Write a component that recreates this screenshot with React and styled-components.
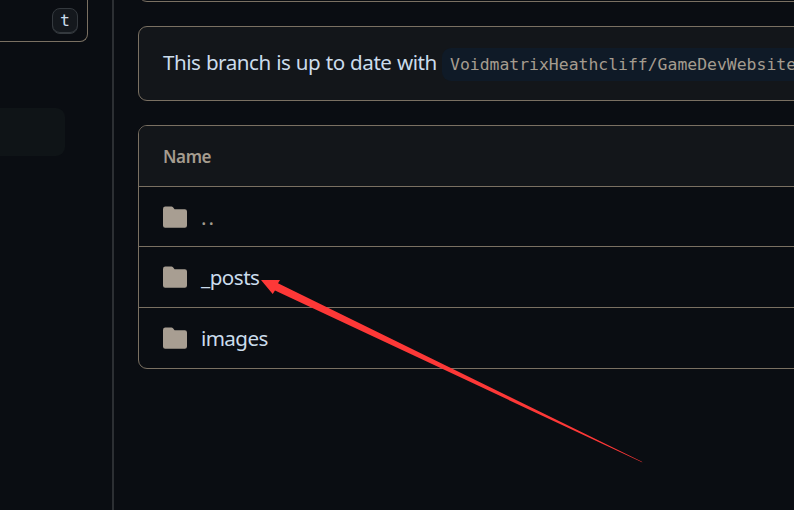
import React from "react";
import styled, { createGlobalStyle } from "styled-components";

const line = "#7a7062";
const canvas = "#0a0d12";
const subtle = "#13161a";

const GlobalStyle = createGlobalStyle`
  * { box-sizing: border-box; }
  html, body { margin: 0; background: ${canvas}; overflow: hidden; }
  body { font-family: "Noto Sans", "Open Sans", sans-serif; color: #cbdcec; }
`;

const Page = styled.div`
  position: relative;
  display: flex;
  width: 794px;
  height: 510px;
  overflow: hidden;
  background: ${canvas};
`;

const Sidebar = styled.aside`
  flex: none;
  width: 114px;
  border-right: 2px solid #2c2f33;
`;

const SearchBox = styled.div`
  display: flex;
  justify-content: flex-end;
  width: 88px;
  height: 42px;
  padding: 8px 9px 0 0;
  border: solid ${line};
  border-width: 0 1px 1px 0;
  border-bottom-right-radius: 8px;
`;

const KeyHint = styled.kbd`
  display: flex;
  align-items: center;
  justify-content: center;
  width: 26px;
  height: 26px;
  border: 1px solid #34393e;
  border-radius: 8px;
  background: #14181d;
  box-shadow: inset 0 -1px 0 #34393e;
  font: 16.5px/1 "DejaVu Sans Mono", monospace;
`;

const SelectedItem = styled.div`
  width: 65px;
  height: 48px;
  margin-top: 66px;
  border-radius: 0 9px 9px 0;
  background: #0f1417;
`;

const Main = styled.main`
  flex: 1;
  min-width: 0;
  padding-left: 24px;
`;

const Panel = styled.section`
  width: 700px;
  border: 1px solid ${line};
  border-radius: 9px;
  overflow: hidden;
`;

const PreviousPanel = styled(Panel)`
  height: 20px;
  margin-top: -18px;
`;

const BranchStatus = styled(Panel)`
  display: flex;
  align-items: center;
  height: 75px;
  margin-top: 24px;
  padding-left: 24px;
  background: ${subtle};
  white-space: nowrap;
`;

const StatusText = styled.span`
  width: 279px;
  font-size: 20.6px;
  letter-spacing: -0.46px;
  word-spacing: 0.5px;
  line-height: 30px;
  padding-bottom: 3px;
`;

const BranchName = styled.code`
  height: 33px;
  padding: 0 8px;
  margin-top: 1px;
  border-radius: 9px;
  background: #0f1a27;
  color: #a59c8f;
  font: 16.43px/33px "DejaVu Sans Mono", monospace;
`;

const FileTable = styled(Panel)`
  height: 244px;
  margin-top: 24px;
`;

const TableHead = styled.header`
  height: 60px;
  padding: 1px 0 0 24px;
  background: ${subtle};
  color: #a59c8f;
  font-size: 17px;
  font-weight: 600;
  letter-spacing: -0.4px;
  line-height: 60px;
`;

const FileRow = styled.div`
  display: flex;
  align-items: center;
  height: ${(p) => p.$height}px;
  padding-left: 24px;
  border-top: 1px solid ${line};
`;

const FolderSvg = styled.svg`
  flex: none;
  width: 24px;
  height: 22px;
  margin-right: 14px;
  fill: #a89e92;
`;

const FileName = styled.span`
  color: ${(p) => (p.$muted ? "#a59c8f" : "#cbdcec")};
  font-size: 20.6px;
  line-height: 30px;
  letter-spacing: ${(p) => p.$tracking}px;
`;

const Arrow = styled.svg`
  position: absolute;
  inset: 0;
  width: 794px;
  height: 510px;
  pointer-events: none;
`;

const files = [
  { name: "..", muted: true, height: 60, tracking: 2 },
  { name: "_posts", height: 61, tracking: -0.5 },
  { name: "images", height: 61, tracking: -0.6 },
];

const Folder = () => (
  <FolderSvg viewBox="0 0 24 22">
    <path d="M2.4 .5H8.5Q9.4 .5 10 1.2L11.2 2.8Q11.5 3.3 12.2 3.3H21.8Q24 3.3 24 5.5V19.6Q24 21.8 21.8 21.8H2.2Q0 21.8 0 19.6V2.9Q0 .5 2.4 .5Z" />
  </FolderSvg>
);

export default function App() {
  return (
    <Page>
      <GlobalStyle />
      <Sidebar>
        <SearchBox>
          <KeyHint>t</KeyHint>
        </SearchBox>
        <SelectedItem />
      </Sidebar>
      <Main>
        <PreviousPanel />
        <BranchStatus>
          <StatusText>This branch is up to date with</StatusText>
          <BranchName>VoidmatrixHeathcliff/GameDevWebsite</BranchName>
        </BranchStatus>
        <FileTable>
          <TableHead>Name</TableHead>
          {files.map((f) => (
            <FileRow key={f.name} $height={f.height}>
              <Folder />
              <FileName $muted={f.muted} $tracking={f.tracking}>{f.name}</FileName>
            </FileRow>
          ))}
        </FileTable>
      </Main>
      <Arrow viewBox="0 0 794 510">
        <polygon points="261,280 280,280 278,283.2 641.5,461.4 642.5,462.6 275,290.6 272.7,294" fill="#fd3837" />
      </Arrow>
    </Page>
  );
}
